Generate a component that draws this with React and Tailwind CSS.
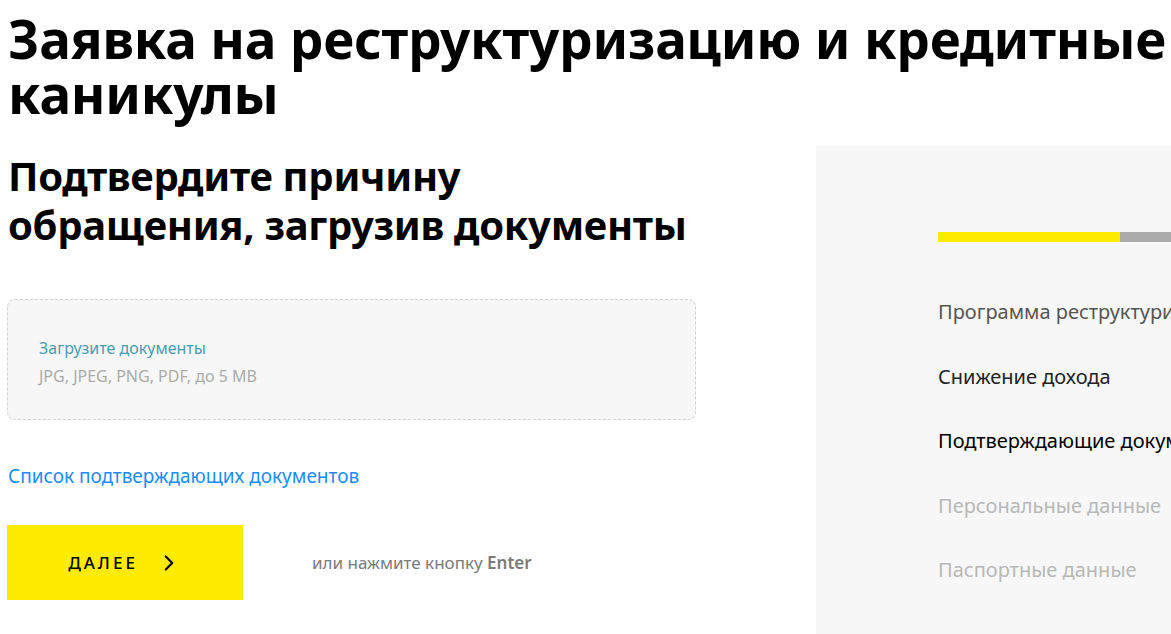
import { ChevronRight } from "lucide-react";

const steps = [
  { label: "Программа реструктуризации", cls: "text-[#555555]" },
  { label: "Снижение дохода", cls: "text-[#222222]" },
  { label: "Подтверждающие документы", cls: "text-black" },
  { label: "Персональные данные", cls: "text-[#b8b8b8]" },
  { label: "Паспортные данные", cls: "text-[#b8b8b8]" },
];

export default function App() {
  return (
    <div className="h-[634px] w-[1171px] overflow-hidden bg-white font-['Noto_Sans',sans-serif] text-black">
      {/* Page title */}
      <h1 className="w-[1200px] pl-[8px] pt-[11px] text-[53px] font-bold leading-[55px] tracking-[-0.2px]">
        Заявка на реструктуризацию и кредитные
        <br />
        каникулы
      </h1>

      <div className="mt-[17px] flex">
        {/* Form column */}
        <div className="w-[696px] shrink-0 pl-[7px]">
          <h2 className="pl-[1px] pt-[13px] text-[40px] font-bold leading-[49px] tracking-[-0.3px]">
            Подтвердите причину
            <br />
            обращения, загрузив документы
          </h2>

          <div className="mt-[50px] flex h-[121px] flex-col justify-center rounded-[8px] border border-dashed border-[#d2d2d2] bg-[#f7f7f7] pl-[31px] pt-[4px]">
            <div className="text-[16px] leading-[20px] text-[#4b9bb3]">Загрузите документы</div>
            <div className="mt-[8px] text-[16px] leading-[20px] text-[#ababab]">
              JPG, JPEG, PNG, PDF, до 5 MB
            </div>
          </div>

          <a className="mt-[44px] block pl-[1px] text-[19px] leading-[24px] text-[#1a8cff]">
            Список подтверждающих документов
          </a>

          <div className="mt-[37px] flex items-center">
            <button className="flex h-[75px] w-[236px] items-center justify-center gap-[18px] bg-[#ffeb00]">
              <span className="text-[17px] font-medium tracking-[3px] text-black">ДАЛЕЕ</span>
              <ChevronRight size={26} strokeWidth={2} className="text-black" />
            </button>
            <div className="ml-[69px] text-[17px] text-[#7a7a7a]">
              или нажмите кнопку <span className="font-semibold">Enter</span>
            </div>
          </div>
        </div>

        {/* Steps panel */}
        <aside className="ml-[120px] mt-[8px] h-[488px] w-[420px] shrink-0 bg-[#f7f7f7] pl-[122px] pt-[86px]">
          <div className="flex h-[10px]">
            <div className="w-[182px] bg-[#ffeb00]" />
            <div className="flex-1 bg-[#aaaaaa]" />
          </div>
          <ul className="mt-[57px] flex flex-col gap-[39.5px]">
            {steps.map((s) => (
              <li key={s.label} className={`whitespace-nowrap text-[20px] leading-[25px] ${s.cls}`}>
                {s.label}
              </li>
            ))}
          </ul>
        </aside>
      </div>
    </div>
  );
}
